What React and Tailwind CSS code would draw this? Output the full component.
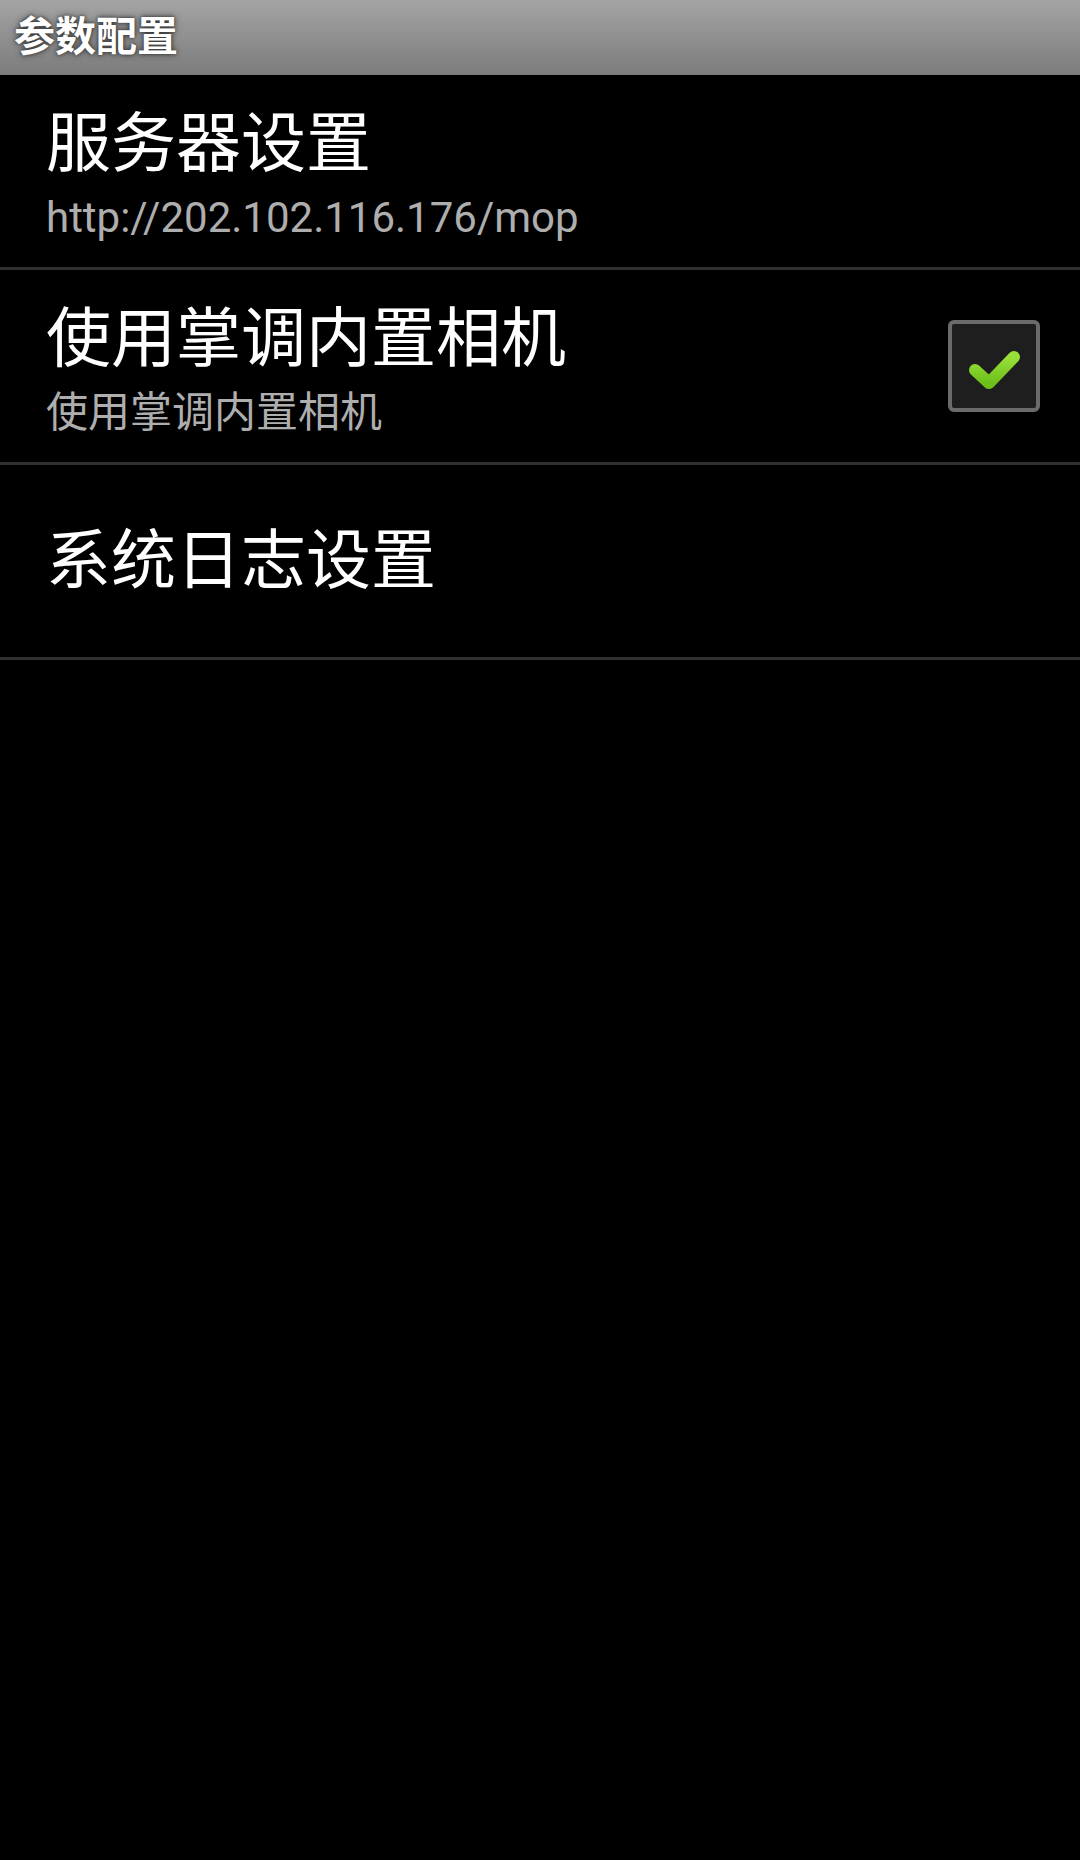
import React from "react";

const CJK = "font-['Roboto','Noto_Sans_CJK_SC',sans-serif]";

const CheckBox = ({ checked }) => (
  <div className="w-[92px] h-[92px] rounded-[6px] border-[4px] border-[#6b6b6b] bg-[#1e1e1e] flex items-center justify-center shadow-[0_0_2px_#000]">
    {checked && (
      <svg width="60" height="60" viewBox="0 0 60 60">
        <defs>
          <linearGradient id="chk" x1="0" y1="0" x2="0" y2="1">
            <stop offset="0" stopColor="#9be03a" />
            <stop offset="1" stopColor="#6cc01a" />
          </linearGradient>
        </defs>
        <path
          d="M11 34 L25 47 L50 21"
          fill="none"
          stroke="url(#chk)"
          strokeWidth="12"
          strokeLinecap="round"
          strokeLinejoin="round"
        />
      </svg>
    )}
  </div>
);

const PrefRow = ({ title, summary, widget }) => (
  <div className="h-[195px] flex items-center pl-[46px] pr-[40px] border-b-[3px] border-[#303030]">
    <div className={`flex-1 flex flex-col ${summary ? "pt-[6px]" : ""}`}>
      <div className="text-[65px] leading-[80px] text-white">{title}</div>
      {summary && (
        <div className="mt-[7px] text-[42px] leading-[54px] text-[#aeaeae]">{summary}</div>
      )}
    </div>
    {widget}
  </div>
);

export default function App() {
  return (
    <div className={`w-[1080px] h-[1860px] bg-black ${CJK}`}>
      <div className="h-[75px] bg-gradient-to-b from-[#a4a4a4] to-[#7c7c7c] flex items-center pl-[14px]">
        <span className="text-[41px] font-bold text-white [text-shadow:0_0_6px_#333,0_0_3px_#444]">
          参数配置
        </span>
      </div>
      <PrefRow title="服务器设置" summary="http://202.102.116.176/mop" />
      <PrefRow
        title="使用掌调内置相机"
        summary="使用掌调内置相机"
        widget={<CheckBox checked />}
      />
      <PrefRow title="系统日志设置" />
    </div>
  );
}
